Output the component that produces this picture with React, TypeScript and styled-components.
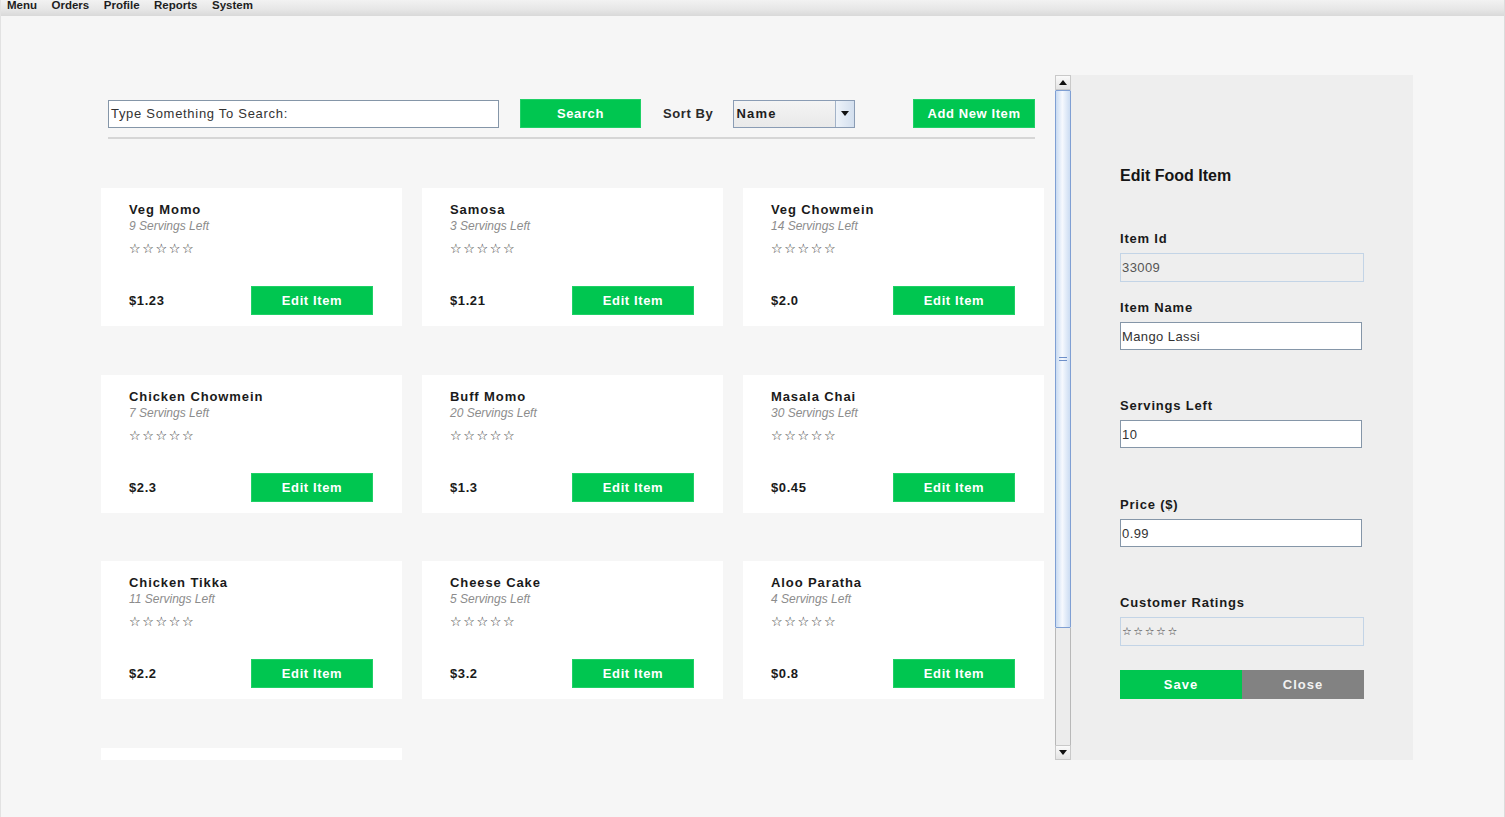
import styled, { createGlobalStyle } from "styled-components";

const GlobalStyle = createGlobalStyle`
  html, body {
    margin: 0;
    padding: 0;
    background: #f6f6f6;
    font-family: "Liberation Sans", Arial, sans-serif;
  }
  #root {
    width: 1505px;
    height: 817px;
    overflow: hidden;
  }
`;

const green = "#00c650";

const Frame = styled.div`
  width: 1505px;
  height: 817px;
  box-sizing: border-box;
  border-left: 1px solid #e2e2e2;
  border-right: 1px solid #dcdcdc;
  background: #f6f6f6;
`;

const MenuBar = styled.div`
  height: 16px;
  display: flex;
  align-items: flex-start;
  padding-left: 6px;
  gap: 14.5px;
  background: linear-gradient(to bottom, #f2f2f2, #e6e6e6 60%, #d9d9d9);
  overflow: hidden;
`;

const MenuItem = styled.span`
  font-size: 11.5px;
  line-height: 12px;
  margin-top: -1px;
  color: #1e1e1e;
  font-weight: bold;
`;

const Body = styled.div`
  display: flex;
  padding: 59px 0 0 100px;
`;

const ScrollPane = styled.div`
  width: 954px;
  height: 685px;
  overflow: hidden;
  padding-top: 24px;
  box-sizing: border-box;
`;

const Toolbar = styled.div`
  display: flex;
  align-items: center;
  margin-left: 7px;
  width: 927px;
  height: 29px;
`;

const SearchInput = styled.div`
  width: 391px;
  height: 28px;
  box-sizing: border-box;
  border: 1px solid #8596a8;
  background: #fff;
  font-size: 13px;
  color: #333;
  padding-left: 2px;
  display: flex;
  align-items: center;
  letter-spacing: 0.7px;
`;

const GreenButton = styled.div<{ $w?: number }>`
  width: ${(p) => p.$w ?? 121}px;
  height: 29px;
  background: ${green};
  color: #fff;
  font-weight: bold;
  font-size: 13px;
  letter-spacing: 0.6px;
  display: flex;
  align-items: center;
  justify-content: center;
  box-sizing: border-box;
  border: 1px solid #1fd066;
`;

const SortLabel = styled.span`
  margin-left: 22px;
  font-size: 13px;
  font-weight: bold;
  color: #2a2a2a;
  letter-spacing: 0.6px;
`;

const Combo = styled.div`
  margin-left: 20px;
  width: 122px;
  height: 28px;
  box-sizing: border-box;
  border: 1px solid #8a9cb4;
  display: flex;
  background: linear-gradient(to bottom, #f4f4f4, #e9e9e9);
`;

const ComboText = styled.div`
  flex: 1;
  font-size: 13px;
  font-weight: bold;
  letter-spacing: 1.2px;
  color: #1d1d1d;
  display: flex;
  align-items: center;
  padding-left: 2px;
`;

const ComboArrow = styled.div`
  width: 18px;
  border-left: 1px solid #a3b3c8;
  background: linear-gradient(to right, #eef3f9, #d3dfee);
  display: flex;
  align-items: center;
  justify-content: center;
`;

const Separator = styled.div`
  margin: 9px 0 0 7px;
  width: 927px;
  height: 2px;
  background: #d6d6d6;
`;

const Grid = styled.div`
  margin-top: 49px;
  display: grid;
  grid-template-columns: repeat(3, 301px);
  grid-auto-rows: 138px;
  column-gap: 20px;
  row-gap: 48.5px;
`;

const Card = styled.div`
  background: #fff;
  display: flex;
  flex-direction: column;
  padding: 14px 29px 11px 28px;
  box-sizing: border-box;
`;

const CardTitle = styled.div`
  font-size: 13px;
  line-height: 16px;
  font-weight: bold;
  letter-spacing: 0.9px;
  color: #1a1a1a;
`;

const Servings = styled.div`
  font-size: 12px;
  line-height: 16px;
  font-style: italic;
  color: #8c8c8c;
`;

const Stars = styled.div`
  margin-top: 7px;
  font-family: "DejaVu Sans", sans-serif;
  font-size: 13px;
  line-height: 16px;
  letter-spacing: 1.6px;
  color: #2e2e2e;
`;

const CardFooter = styled.div`
  margin-top: auto;
  display: flex;
  align-items: center;
  justify-content: space-between;
`;

const Price = styled.span`
  font-size: 13px;
  font-weight: bold;
  letter-spacing: 0.6px;
  color: #1a1a1a;
`;

const ScrollBar = styled.div`
  width: 16px;
  height: 685px;
  display: flex;
  flex-direction: column;
  box-sizing: border-box;
`;

const ArrowBtn = styled.div`
  height: 15px;
  border: 1px solid #c9c9c9;
  background: linear-gradient(to bottom, #fafafa, #e4e4e4);
  display: flex;
  align-items: center;
  justify-content: center;
  box-sizing: border-box;
`;

const Thumb = styled.div`
  height: 538px;
  box-sizing: border-box;
  border: 1px solid #7f9fd3;
  border-radius: 1px;
  background: linear-gradient(to right, #c9dbf2, #f6f9fe 45%, #cbdcf2);
  display: flex;
  align-items: center;
  justify-content: center;
`;

const Grip = styled.div`
  width: 8px;
  height: 4px;
  border-top: 1px solid #6d8fc9;
  border-bottom: 1px solid #6d8fc9;
  box-sizing: border-box;
`;

const Track = styled.div`
  flex: 1;
  background: #ececec;
  border-left: 1px solid #b8b8b8;
  border-right: 1px solid #b8b8b8;
`;

const EditPanel = styled.div`
  width: 342px;
  height: 685px;
  background: #eeeeee;
  box-sizing: border-box;
  padding: 92px 0 0 49px;
  display: flex;
  flex-direction: column;
`;

const PanelTitle = styled.div`
  font-size: 16px;
  line-height: 18px;
  font-weight: bold;
  color: #151515;
  margin-bottom: 46px;
`;

const FieldLabel = styled.div<{ $gap: number }>`
  margin-top: ${(p) => p.$gap}px;
  font-size: 13px;
  line-height: 16px;
  font-weight: bold;
  letter-spacing: 0.8px;
  color: #1a1a1a;
  margin-bottom: 6px;
`;

const Field = styled.div<{ $disabled?: boolean }>`
  width: ${(p) => (p.$disabled ? 244 : 242)}px;
  height: ${(p) => (p.$disabled ? 29 : 28)}px;
  box-sizing: border-box;
  border: 1px solid ${(p) => (p.$disabled ? "#c3d4e6" : "#8596a8")};
  background: ${(p) => (p.$disabled ? "#eeeeee" : "#fff")};
  color: ${(p) => (p.$disabled ? "#555" : "#333")};
  font-size: 13px;
  letter-spacing: 0.4px;
  padding-left: 1px;
  display: flex;
  align-items: center;
`;

const StarField = styled.span`
  font-family: "DejaVu Sans", sans-serif;
  font-size: 11px;
  letter-spacing: 1.5px;
  color: #333;
`;

const ButtonRow = styled.div`
  margin-top: 24px;
  display: flex;
`;

const PanelButton = styled.div<{ $grey?: boolean }>`
  width: 122px;
  height: 29px;
  background: ${(p) => (p.$grey ? "#828282" : green)};
  color: ${(p) => (p.$grey ? "#f2f2f2" : "#fff")};
  font-size: 13px;
  font-weight: bold;
  letter-spacing: 1px;
  display: flex;
  align-items: center;
  justify-content: center;
`;

const items = [
  { name: "Veg Momo", servings: 9, price: "$1.23" },
  { name: "Samosa", servings: 3, price: "$1.21" },
  { name: "Veg Chowmein", servings: 14, price: "$2.0" },
  { name: "Chicken Chowmein", servings: 7, price: "$2.3" },
  { name: "Buff Momo", servings: 20, price: "$1.3" },
  { name: "Masala Chai", servings: 30, price: "$0.45" },
  { name: "Chicken Tikka", servings: 11, price: "$2.2" },
  { name: "Cheese Cake", servings: 5, price: "$3.2" },
  { name: "Aloo Paratha", servings: 4, price: "$0.8" },
  { name: "", servings: 0, price: "" },
];

const Triangle = ({ down }: { down?: boolean }) => (
  <svg width="8" height="5" viewBox="0 0 8 5">
    <path d={down ? "M0 0 L8 0 L4 5 Z" : "M0 5 L8 5 L4 0 Z"} fill="#111" />
  </svg>
);

export default function App() {
  return (
    <Frame>
      <GlobalStyle />
      <MenuBar>
        {["Menu", "Orders", "Profile", "Reports", "System"].map((m) => (
          <MenuItem key={m}>{m}</MenuItem>
        ))}
      </MenuBar>
      <Body>
        <ScrollPane>
          <Toolbar>
            <SearchInput>Type Something To Search:</SearchInput>
            <GreenButton style={{ marginLeft: 21 }}>Search</GreenButton>
            <SortLabel>Sort By</SortLabel>
            <Combo>
              <ComboText>Name</ComboText>
              <ComboArrow>
                <Triangle down />
              </ComboArrow>
            </Combo>
            <GreenButton style={{ marginLeft: "auto" }} $w={122}>
              Add New Item
            </GreenButton>
          </Toolbar>
          <Separator />
          <Grid>
            {items.map((it, i) =>
              it.name ? (
                <Card key={i}>
                  <CardTitle>{it.name}</CardTitle>
                  <Servings>{it.servings} Servings Left</Servings>
                  <Stars>☆☆☆☆☆</Stars>
                  <CardFooter>
                    <Price>{it.price}</Price>
                    <GreenButton $w={122}>Edit Item</GreenButton>
                  </CardFooter>
                </Card>
              ) : (
                <Card key={i} />
              )
            )}
          </Grid>
        </ScrollPane>
        <ScrollBar>
          <ArrowBtn>
            <Triangle />
          </ArrowBtn>
          <Thumb>
            <Grip />
          </Thumb>
          <Track />
          <ArrowBtn>
            <Triangle down />
          </ArrowBtn>
        </ScrollBar>
        <EditPanel>
          <PanelTitle>Edit Food Item</PanelTitle>
          <FieldLabel $gap={0}>Item Id</FieldLabel>
          <Field $disabled>33009</Field>
          <FieldLabel $gap={18}>Item Name</FieldLabel>
          <Field>Mango Lassi</Field>
          <FieldLabel $gap={48}>Servings Left</FieldLabel>
          <Field>10</Field>
          <FieldLabel $gap={49}>Price ($)</FieldLabel>
          <Field>0.99</Field>
          <FieldLabel $gap={48}>Customer Ratings</FieldLabel>
          <Field $disabled>
            <StarField>☆☆☆☆☆</StarField>
          </Field>
          <ButtonRow>
            <PanelButton>Save</PanelButton>
            <PanelButton $grey>Close</PanelButton>
          </ButtonRow>
        </EditPanel>
      </Body>
    </Frame>
  );
}
